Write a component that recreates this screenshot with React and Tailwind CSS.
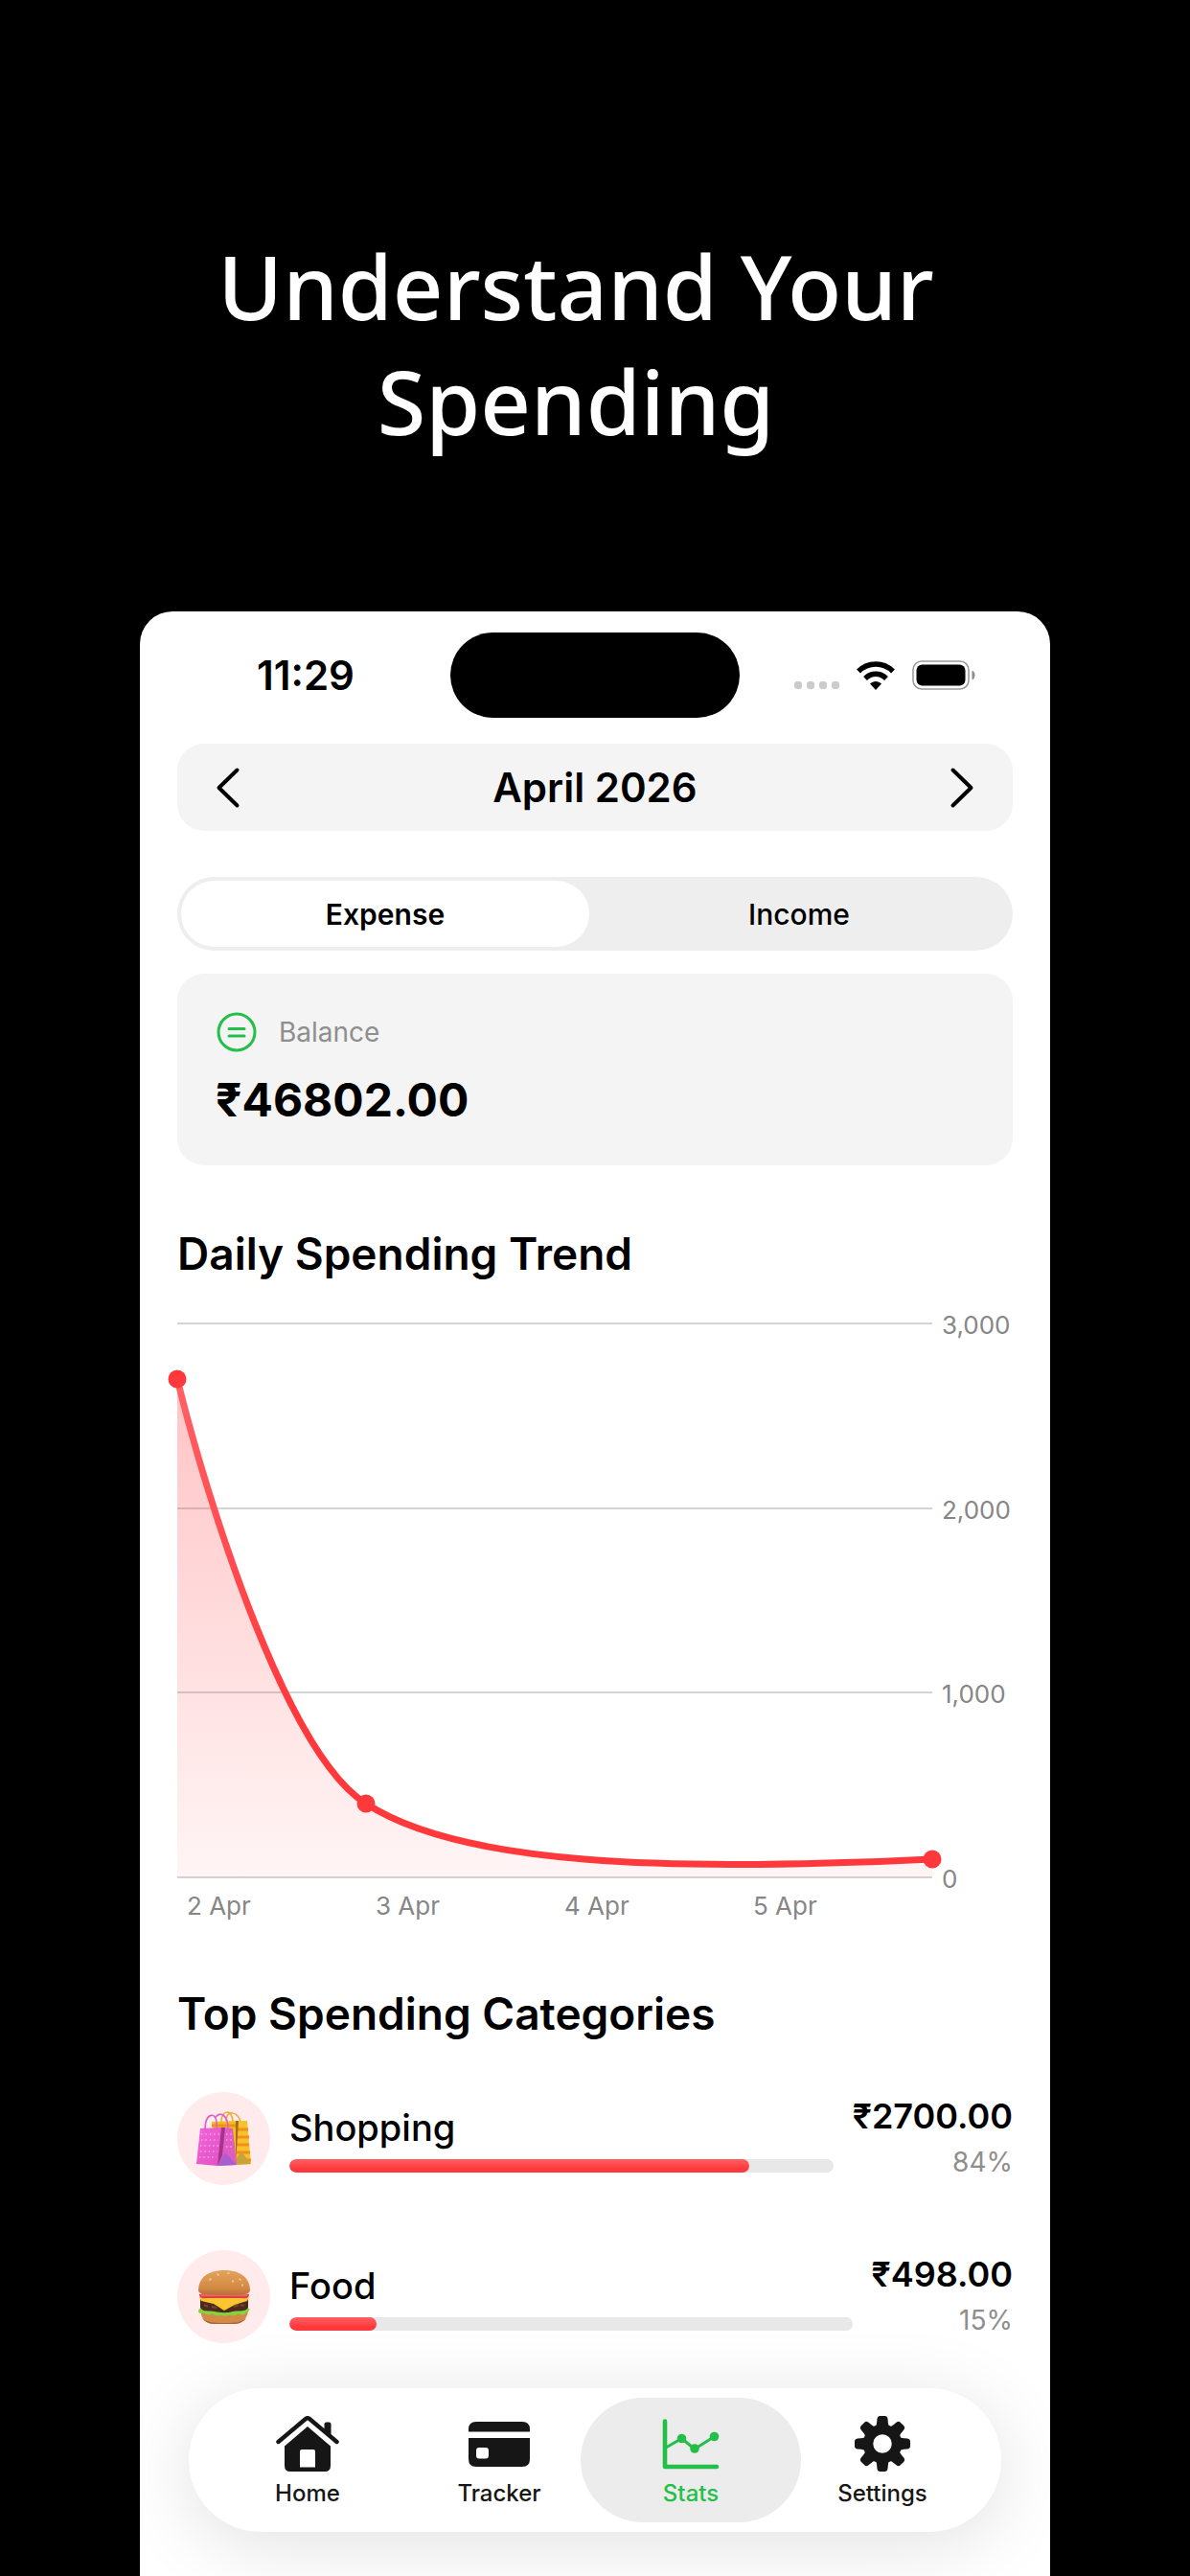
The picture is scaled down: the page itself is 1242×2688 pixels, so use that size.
import { useState } from "react"

const MONTHS = [
  "January", "February", "March", "April", "May", "June",
  "July", "August", "September", "October", "November", "December",
]

const CATEGORIES = [
  { name: "Shopping", amount: "₹2700.00", percent: 84, share: 84.5, icon: ShoppingBags },
  { name: "Food", amount: "₹498.00", percent: 15, share: 15.5, icon: Burger },
]

const TABS = [
  { id: "home", label: "Home", icon: HomeIcon },
  { id: "tracker", label: "Tracker", icon: CardIcon },
  { id: "stats", label: "Stats", icon: StatsIcon },
  { id: "settings", label: "Settings", icon: GearIcon },
]

const Y_TICKS = ["3,000", "2,000", "1,000", "0"]
const X_TICKS = ["2 Apr", "3 Apr", "4 Apr", "5 Apr"]

const CURVE = "M0 58 C33 192 115 450 197 501 C297 566 515 572 788 559"

function ShoppingBags() {
  return (
    <svg width="58" height="58" viewBox="0 0 58 58" aria-hidden="true">
      <defs>
        <linearGradient id="bagPink" x1="0" y1="0" x2="1" y2="1">
          <stop offset="0" stopColor="#f266d8" />
          <stop offset="1" stopColor="#e24fc4" />
        </linearGradient>
      </defs>
      {/* yellow bag */}
      <path d="M26 11 C26 -2 37 -2 38 10" fill="none" stroke="#f3a531" strokeWidth="1.5" />
      <path d="M31 10 C31 -2 43 0 46 11" fill="none" stroke="#f3a531" strokeWidth="1.5" />
      <path d="M16 11 L42 10 L42 55 L22 55 Z" fill="#f0bf1c" />
      <path d="M41 10 L53 10 L57 55 L40 56 Z" fill="#f6c22c" />
      <path d="M42 19h12M42 27h13M42 35h13M42 43h14M42 51h15M16 15h25" stroke="#f08f1b" strokeWidth="3" />
      <path d="M41 10 L44 10 L42 40 L41 52 Z" fill="#a9671c" />
      <path d="M41 50 L47 42 L57 55 L40 56 Z" fill="#c9a33a" />
      {/* pink bag */}
      <path d="M4 18 L26 17 L22 57 L0 55 Z" fill="url(#bagPink)" />
      <path d="M26 17 L38 18 L42 56 L22 57 Z" fill="#e05cc4" />
      <path d="M26 17 L30 17 L27 46 L22 57 Z" fill="#a53190" />
      <path d="M22 57 L30 43 L42 56 Z" fill="#a85fcb" />
      <path
        d="M5 24H24M5 30H23M4 36H23M4 42H22M3 48H21M31 24H38M31 30H38M31 37H39"
        stroke="#f9a9ea"
        strokeWidth="1.4"
        strokeDasharray="1.4 3"
      />
      <path d="M9 20 C9 0 21 1 21 12 V20" fill="none" stroke="#df5cc9" strokeWidth="1.6" />
      <path d="M20 6 C25 0 33 4 33 18" fill="none" stroke="#df5cc9" strokeWidth="1.6" />
    </svg>
  )
}

function Burger() {
  return (
    <svg width="54" height="56" viewBox="0 0 54 56" aria-hidden="true">
      <defs>
        <linearGradient id="bunTop" x1="0" y1="0" x2="0" y2="1">
          <stop offset="0" stopColor="#e3a35c" />
          <stop offset="0.7" stopColor="#d48a45" />
          <stop offset="1" stopColor="#b96f35" />
        </linearGradient>
      </defs>
      <path d="M2 43 C4 52 8 55 16 55 H38 C46 55 50 52 52 43 Z" fill="#d38a49" />
      <path d="M4 50 C9 54 14 55 27 55 S45 54 50 50 C47 54 43 56 38 56 H16 C11 56 7 54 4 50Z" fill="#a9642f" />
      <path
        d="M1 40 C4 38 50 38 53 40 C55 43 50 43 49 45 C46 49 43 44 40 46 C37 49 34 45 31 47 C28 49 25 46 22 47 C18 49 16 44 13 46 C9 48 7 44 4 45 C0 45 -1 43 1 40 Z"
        fill="#84d43c"
      />
      <path d="M2 30 H52 V39 C49 44 41 42 36 43 C29 45 22 44 17 43 C11 42 5 44 2 39 Z" fill="#4c2a1d" />
      <path d="M6 36l4 2M14 38l5 1M37 38l5-2M44 36l4 1" stroke="#7b4630" strokeWidth="2" />
      <path d="M1 28 C12 26 42 26 53 28 L51 32 L38 36 L27 42 L16 35 L3 32 Z" fill="#fbc52f" />
      <path d="M1 25 C8 23 46 23 53 25 C53 29 50 30 45 29 H9 C4 30 1 29 1 25 Z" fill="#e23c45" />
      <path d="M3 26 H51" stroke="#f58d8b" strokeWidth="1" />
      <path d="M0 20 C1 6 12 0 27 0 S53 6 54 20 C54 25 50 26 27 26 C4 26 0 25 0 20 Z" fill="url(#bunTop)" />
      <path
        d="M20 4l1 1M31 3l1 0M36 11v1M43 9l1 1M13 9l-1 1M46 15l0 1"
        stroke="#f3d3a0"
        strokeWidth="1.6"
        strokeLinecap="round"
      />
    </svg>
  )
}

function HomeIcon() {
  return (
    <svg width="66" height="60" viewBox="0 0 66 60" fill="currentColor" aria-hidden="true">
      <path
        d="M2.5 28 L31 4 Q33 2.5 35 4 L63.5 28"
        fill="none"
        stroke="currentColor"
        strokeWidth="4.4"
        strokeLinecap="round"
        strokeLinejoin="round"
      />
      <path d="M50.500 18 V9.500 Q50.500 7.500 52.500 7.500 H55.500 Q57.500 7.500 57.500 9.500 V24 Z" />
      <path
        fillRule="evenodd"
        d="M33 12 L57 32.500 V53 Q57 59 51 59 H15 Q9 59 9 53 V32.500 Z M27 36 Q25 36 25 38 V54.500 H41 V38 Q41 36 39 36 Z"
      />
    </svg>
  )
}

function CardIcon() {
  return (
    <svg width="66" height="60" viewBox="0 0 66 60" fill="currentColor" aria-hidden="true">
      <path d="M1 17.5 V15 Q1 7 9 7 H57 Q65 7 65 15 V17.5 Z" />
      <path
        fillRule="evenodd"
        d="M1 24 H65 V46 Q65 54 57 54 H9 Q1 54 1 46 Z M12 34 Q9 34 9 37 V42.5 Q9 45.5 12 45.5 H19 Q22 45.5 22 42.5 V37 Q22 34 19 34 Z"
      />
    </svg>
  )
}

function StatsIcon() {
  return (
    <svg width="60" height="60" viewBox="0 0 60 60" aria-hidden="true">
      <g fill="none" stroke="currentColor" strokeLinecap="round" strokeLinejoin="round">
        <path d="M3 6.5 V54 H57" strokeWidth="4.6" />
        <path d="M4 34 L20.5 24.5 L34 35.5 L54.5 22.5" strokeWidth="3" />
      </g>
      <g fill="currentColor">
        <circle cx="20.5" cy="24.5" r="4.8" />
        <circle cx="34" cy="35" r="4.8" />
        <circle cx="54.5" cy="22.5" r="4.8" />
      </g>
    </svg>
  )
}

const TEETH = [0, 45, 90, 135, 180, 225, 270, 315]

function GearIcon() {
  return (
    <svg width="60" height="60" viewBox="0 0 60 60" fill="currentColor" aria-hidden="true">
      {TEETH.map(angle => (
        <path
          key={angle}
          d="M22 14 Q24 12 24.5 4 Q25 1 27.5 1 H32.5 Q35 1 35.5 4 Q36 12 38 14 Z"
          transform={`rotate(${angle} 30 30)`}
        />
      ))}
      <circle cx="30" cy="30" r="15" fill="none" stroke="currentColor" strokeWidth="10.5" />
    </svg>
  )
}

function StatusBar() {
  return (
    <div className="grid grid-cols-[1fr_302px_1fr] items-center">
      <span className="pl-[22px] text-center text-[42px] leading-[48px] font-semibold">11:29</span>
      <div className="h-[89px] rounded-full bg-black" />
      <div className="flex items-center justify-center gap-[18px] pr-[22px]">
        <div className="flex gap-[5px] pt-5">
          {[0, 1, 2, 3].map(i => (
            <span key={i} className="size-2 rounded-[3px] bg-[#cbcbcb]" />
          ))}
        </div>
        <svg width="40" height="30" viewBox="0 0 40 30" fill="none" stroke="#000" aria-hidden="true">
          <path d="M2 10.5 C12 0.5 28 0.5 38 10.5" strokeWidth="5.5" />
          <path d="M9 18 C15.5 11.8 24.5 11.8 31 18" strokeWidth="5.5" />
          <path d="M20 30 L14 23.5 C17.5 20 22.5 20 26 23.5 Z" fill="#000" stroke="none" />
        </svg>
        <svg width="66" height="31" viewBox="0 0 66 31" aria-hidden="true">
          <rect x="1" y="1" width="58" height="29" rx="9" fill="none" stroke="#9b9b9b" strokeWidth="1.6" />
          <rect x="4.5" y="4.5" width="51" height="22" rx="6" />
          <path d="M62.5 10.5 Q65.5 12 65.5 15.5 T62.5 20.5 Z" fill="#8c8c8c" />
        </svg>
      </div>
    </div>
  )
}

function MonthPicker() {
  const [month, setMonth] = useState(3)
  const year = 2026 + Math.floor(month / 12)

  return (
    <div className="mt-[27px] flex h-[91px] items-center justify-between rounded-[28px] bg-[#f4f4f4] px-10">
      <button type="button" aria-label="Previous month" onClick={() => setMonth(m => m - 1)}>
        <svg width="26" height="44" viewBox="0 0 26 44" fill="none" stroke="#000" strokeWidth="4" strokeLinecap="round" strokeLinejoin="round">
          <path d="M22.5 3.5 L3.5 22 L22.5 40.5" />
        </svg>
      </button>
      <h2 className="text-[42px] leading-[52px] font-semibold">
        {MONTHS[((month % 12) + 12) % 12]} {year}
      </h2>
      <button type="button" aria-label="Next month" onClick={() => setMonth(m => m + 1)}>
        <svg width="26" height="44" viewBox="0 0 26 44" fill="none" stroke="#000" strokeWidth="4" strokeLinecap="round" strokeLinejoin="round">
          <path d="M3.5 3.5 L22.5 22 L3.5 40.5" />
        </svg>
      </button>
    </div>
  )
}

function TypeSwitch() {
  const [type, setType] = useState("Expense")

  return (
    <div className="mt-12 grid h-[77px] grid-cols-[426fr_438fr] rounded-full bg-[#eeeeee] p-1">
      {["Expense", "Income"].map(t => (
        <button
          key={t}
          type="button"
          aria-pressed={type === t}
          onClick={() => setType(t)}
          className={`rounded-full text-[30px] leading-9 ${type === t ? "bg-white font-semibold" : "font-medium"}`}
        >
          {t}
        </button>
      ))}
    </div>
  )
}

function TrendChart() {
  return (
    <section>
      <h2 className="mt-16 text-[46px] leading-[56px] font-semibold">Daily Spending Trend</h2>
      <div className="mt-[45px] flex">
        <svg viewBox="0 0 788 578" className="block min-w-0 flex-1 overflow-visible" role="img" aria-label="Daily spending, 2 to 6 April">
          <defs>
            <linearGradient id="area" x1="0" y1="0" x2="0" y2="1">
              <stop offset="0" stopColor="#ff383c" stopOpacity="0.3" />
              <stop offset="1" stopColor="#ff383c" stopOpacity="0.05" />
            </linearGradient>
            <linearGradient id="stroke" x1="0" y1="0" x2="0" y2="1">
              <stop offset="0" stopColor="#ff6165" />
              <stop offset="0.7" stopColor="#ff383c" />
            </linearGradient>
          </defs>
          <path d="M0 0H788M0 193H788M0 385H788M0 578H788" stroke="#c6c6c6" strokeWidth="1.5" />
          <path d={`${CURVE} V578 H0 Z`} fill="url(#area)" />
          <path d={CURVE} fill="none" stroke="url(#stroke)" strokeWidth="7" />
          <g fill="#ff383c">
            <circle cx="0" cy="58" r="9.5" />
            <circle cx="197" cy="501" r="9.5" />
            <circle cx="788" cy="559" r="9.5" />
          </g>
        </svg>
        <div className="-mt-3 -mb-4 flex w-[84px] flex-col justify-between pl-[10px] text-[26px] leading-7 text-[#868686]">
          {Y_TICKS.map(t => <span key={t}>{t}</span>)}
        </div>
      </div>
      <div className="mt-4 mr-[84px] grid grid-cols-4 text-[26px] leading-7 text-[#868686]">
        {X_TICKS.map(t => <span key={t} className="pl-[10px]">{t}</span>)}
      </div>
    </section>
  )
}

function CategoryRow({ name, amount, percent, share, icon: Icon }) {
  return (
    <li className="flex items-center gap-5">
      <div className="flex size-[97px] shrink-0 items-center justify-center rounded-full bg-[#ffebec]">
        <Icon />
      </div>
      <div className="min-w-0 flex-1">
        <p className="text-[38px] leading-[48px] font-medium">{name}</p>
        <div className="mt-[9px] h-[14px] overflow-hidden rounded-full bg-[#e8e8e8]">
          <div
            className="h-full rounded-full bg-linear-to-b from-[#ff5f62] to-[#ff383c] to-70%"
            style={{ width: `${share}%` }}
          />
        </div>
      </div>
      <div className="text-right">
        <p className="text-[36px] leading-[48px] font-semibold">{amount}</p>
        <p className="text-[28px] leading-[48px] text-[#8e8e8e]">{percent}%</p>
      </div>
    </li>
  )
}

function TabBar() {
  const [active, setActive] = useState("stats")

  return (
    <nav className="mx-3 mt-[47px] mb-[46px] grid grid-cols-4 rounded-full bg-white px-6 py-[10px] shadow-[0_12px_80px_rgba(0,0,0,0.12)]">
      {TABS.map(({ id, label, icon: Icon }) => (
        <button
          key={id}
          type="button"
          onClick={() => setActive(id)}
          className={`-mx-[15px] flex h-[130px] flex-col items-center rounded-full pt-[18px] text-[24px] leading-8 font-medium ${
            active === id ? "bg-[#ececec] text-[#23bf48]" : "text-[#161616]"
          }`}
        >
          <Icon />
          <span className="mt-[6px]">{label}</span>
        </button>
      ))}
    </nav>
  )
}

export default function App() {
  return (
    <main className="flex min-h-screen flex-col bg-black px-[146px] font-['Inter',sans-serif] text-black">
      <h1 className="pt-[239px] pr-10 text-center font-['Noto_Sans',sans-serif] text-[92px] leading-[120px] font-medium text-white">
        Understand Your
        <br />
        Spending
      </h1>

      <div className="mt-[159px] flex-1 overflow-hidden rounded-t-[34px] bg-white pt-[22px]">
        <StatusBar />

        <div className="px-[39px]">
          <MonthPicker />
          <TypeSwitch />

          <section className="mt-6 h-[200px] rounded-[28px] bg-[#f4f4f4] px-10 pt-[38px]">
            <div className="flex items-center gap-[22px]">
              <svg width="44" height="46" viewBox="0 0 44 46" fill="none" stroke="#23bf48" strokeWidth="3" strokeLinecap="round" aria-hidden="true">
                <circle cx="22" cy="23" r="19" />
                <path d="M14 19.5H30M14 27H30" />
              </svg>
              <span className="text-[28px] leading-9 text-[#8e8e8e]">Balance</span>
            </div>
            <p className="mt-5 text-[48px] leading-[56px] font-bold">₹46802.00</p>
          </section>

          <TrendChart />

          <section>
            <h2 className="mt-[70px] text-[46px] leading-[56px] font-semibold">Top Spending Categories</h2>
            <ul className="mt-[54px] flex flex-col gap-[68px]">
              {CATEGORIES.map(c => <CategoryRow key={c.name} {...c} />)}
            </ul>
          </section>

          <TabBar />
        </div>
      </div>
    </main>
  )
}
